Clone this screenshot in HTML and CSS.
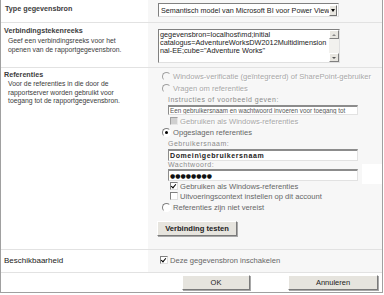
FILE: index.html
```html
<!DOCTYPE html>
<html lang="nl">
<head>
    <meta charset="UTF-8">
    <meta name="viewport" content="width=device-width, initial-scale=1.0">
    <title>Gegevensbron</title>
    <link rel="stylesheet" href="styles.css">
</head>
<body>
    <div class="dialog">
        <div class="row row-type">
            <div class="label">
                <div class="title">Type gegevensbron</div>
            </div>
            <div class="field">
                <div class="select">
                    <span class="select-text">Semantisch model van Microsoft BI voor Power View</span>
                    <span class="select-arrow"></span>
                </div>
            </div>
        </div>

        <div class="row row-conn">
            <div class="label">
                <div class="title">Verbindingstekenreeks</div>
                <div class="desc">Geef een verbindingsreeks voor het<br>openen van de rapportgegevensbron.</div>
            </div>
            <div class="field">
                <div class="textarea">
                    <div class="textarea-text">gegevensbron=localhost\md;initial<br>catalogus=AdventureWorksDW2012Multidimension<br>nal-EE;cube="Adventure Works"</div>
                    <div class="scrollbar">
                        <span class="scroll-btn up"></span>
                        <span class="scroll-btn down"></span>
                    </div>
                </div>
            </div>
        </div>

        <div class="row row-cred">
            <div class="label">
                <div class="title">Referenties</div>
                <div class="desc desc-cred">Voor de referenties in die door de<br>rapportserver worden gebruikt voor<br>toegang tot de rapportgegevensbron.</div>
            </div>
            <div class="field cred-field">
                <div class="opt opt-1 disabled"><span class="radio"></span>Windows-verificatie (geïntegreerd) of SharePoint-gebruiker</div>
                <div class="opt opt-2 disabled"><span class="radio"></span>Vragen om referenties</div>
                <div class="hint hint-1">Instructies of voorbeeld geven:</div>
                <div class="input input-small">Een gebruikersnaam en wachtwoord invoeren voor toegang tot</div>
                <div class="check check-1 disabled"><span class="box"></span>Gebruiken als Windows-referenties</div>
                <div class="opt opt-3"><span class="radio checked"></span>Opgeslagen referenties</div>
                <div class="hint hint-2">Gebruikersnaam:</div>
                <div class="input input-user">Domein\gebruikersnaam</div>
                <div class="hint hint-3">Wachtwoord:</div>
                <div class="input input-pass">●●●●●●●●</div>
                <div class="check check-2"><span class="box checked"></span>Gebruiken als Windows-referenties</div>
                <div class="check check-3"><span class="box"></span>Uitvoeringscontext instellen op dit account</div>
                <div class="opt opt-4"><span class="radio"></span>Referenties zijn niet vereist</div>
                <button class="btn btn-test">Verbinding testen</button>
                <span class="autofill"></span>
            </div>
        </div>

        <div class="row row-avail">
            <div class="label">
                <div class="plain">Beschikbaarheid</div>
            </div>
            <div class="field">
                <div class="check check-avail"><span class="box checked"></span>Deze gegevensbron inschakelen</div>
            </div>
        </div>

        <div class="actions">
            <button class="btn btn-ok">OK</button>
            <button class="btn btn-cancel">Annuleren</button>
        </div>
    </div>
</body>
</html>
```

FILE: styles.css
```css
body { margin: 0; padding: 0; background: #fff; font-family: "Liberation Sans", Arial, sans-serif; color: #444; }
.dialog { width: 381px; border: 1px solid #a0a0a0; border-top: none; }

/* rows */
.row { display: grid; grid-template-columns: 147px 1fr; border-bottom: 1px solid #e2e2e2; }
.label { padding-left: 3px; }
.field { background: #f7f7f7; padding-left: 10px; }
.title { font-weight: bold; font-size: 7.2px; line-height: 10px; color: #3c3c3c; }
.desc { font-size: 6.8px; line-height: 9px; padding-left: 4px; color: #3c3c3c; }
.desc-cred { line-height: 8.7px; }
.plain { font-size: 8px; line-height: 10px; color: #222; }

.row-type { height: 22px; }
.row-type .label { padding-top: 4px; padding-left: 4px; }
.row-type .field { padding-top: 3px; }

.row-conn { height: 44px; }
.row-conn .label { padding-top: 3px; }
.row-conn .field { padding-top: 6px; }

.row-cred { height: 181px; }
.row-cred .label { padding-top: 2px; }

.row-avail { height: 22px; }
.row-avail .label { padding-top: 6px; }
.row-avail .field { padding-top: 5px; }

/* select */
.select { width: 181px; height: 14px; box-sizing: border-box; background: #fff; border: 1px solid; border-color: #808080 #e0e0e0 #e0e0e0 #808080; display: flex; align-items: center; justify-content: space-between; }
.select-text { font-size: 7.2px; color: #222; padding-left: 2px; white-space: nowrap; }
.select-arrow { width: 11px; height: 11px; box-sizing: border-box; margin-right: 1px; background: #e8e6e0; border: 1px solid; border-color: #fff #707070 #707070 #fff; display: flex; align-items: center; justify-content: center; }
.select-arrow::after { content: ""; border-left: 2.5px solid transparent; border-right: 2.5px solid transparent; border-top: 3px solid #000; }

/* textarea */
.textarea { width: 182px; height: 34px; box-sizing: border-box; background: #fff; border: 1px solid; border-color: #808080 #e0e0e0 #e0e0e0 #808080; display: flex; justify-content: space-between; }
.textarea-text { font-size: 7.3px; line-height: 8px; color: #222; padding: 1px 0 0 1px; white-space: nowrap; }
.scrollbar { width: 10px; background: #f2f1ee; display: flex; flex-direction: column; justify-content: space-between; }
.scroll-btn { width: 10px; height: 9px; box-sizing: border-box; background: #e8e6e0; border: 1px solid; border-color: #fff #808080 #808080 #fff; display: flex; align-items: center; justify-content: center; }
.scroll-btn.up::after { content: ""; border-left: 2px solid transparent; border-right: 2px solid transparent; border-bottom: 2px solid #888; }
.scroll-btn.down::after { content: ""; border-left: 2px solid transparent; border-right: 2px solid transparent; border-top: 2px solid #555; }

/* credentials column */
.cred-field { position: relative; padding-top: 3px; display: flex; flex-direction: column; align-items: flex-start; }
.opt, .check { display: flex; align-items: center; height: 10px; font-size: 7.6px; color: #666; white-space: nowrap; }
.opt { margin-left: 4px; }
.check { margin-left: 12px; }
.disabled { color: #a8a8a8; text-shadow: 1px 1px 0 #fff; }
.opt-2 { margin-top: 2px; }
.opt-3 { margin-top: 1px; }
.opt-4 { margin-top: 1px; }
.check-1 { margin-top: 1px; }

.hint { margin-left: 10px; font-size: 7px; line-height: 9px; letter-spacing: 0.5px; color: #8c8c8c; white-space: nowrap; }
.hint-1 { margin-top: 2px; }
.hint-2 { margin-top: 2px; }
.hint-3 { line-height: 8px; }

.input { margin-left: 10px; width: 190px; box-sizing: border-box; background: #fff; border: 1px solid; border-top: 2px solid #8c8c8c; border-color: #8c8c8c #e2e2e2 #e2e2e2 #8c8c8c; white-space: nowrap; overflow: hidden; }
.input-small { margin-top: 1px; height: 10px; font-size: 6.3px; line-height: 7px; color: #555; padding-left: 1px; }
.input-user { margin-top: 1px; height: 12px; font-size: 7px; line-height: 9px; font-weight: bold; letter-spacing: 0.6px; color: #222; padding-left: 1px; }
.input-pass { height: 12px; font-family: "DejaVu Sans", sans-serif; font-size: 6px; line-height: 9px; color: #111; padding-left: 1px; }
.autofill { position: absolute; left: 214px; top: 96px; width: 20px; height: 20px; background: #fff; }

/* radio and checkbox */
.radio { width: 9px; height: 9px; box-sizing: border-box; margin-right: 2px; border-radius: 50%; border: 1px solid; border-color: #808080 #fff #fff #808080; background: #fff; display: flex; align-items: center; justify-content: center; flex-shrink: 0; }
.disabled .radio { background: transparent; border-color: #a0a0a0 transparent transparent #a0a0a0; }
.radio.checked::after { content: ""; width: 3px; height: 3px; border-radius: 50%; background: #000; }
.box { width: 8px; height: 8px; box-sizing: border-box; margin-right: 2px; border: 1px solid; border-color: #808080 #e0e0e0 #e0e0e0 #808080; background: #fff; position: relative; flex-shrink: 0; }
.disabled .box { background: #d0d0d0; border-color: #a0a0a0 #e8e8e8 #e8e8e8 #a0a0a0; }
.box.checked::after { content: ""; position: absolute; left: 1px; top: 0px; width: 2px; height: 4px; border: solid #000; border-width: 0 1.5px 1.5px 0; transform: rotate(40deg); }

.check-avail { margin-left: 2px; }

/* buttons */
.btn { font-family: "Liberation Sans", Arial, sans-serif; font-size: 7.5px; color: #222; background: #e6e4de; border: 1px solid; border-color: #fff #7a7a7a #7a7a7a #fff; box-shadow: 1px 1px 0 #a8a8a8; padding: 0; height: 15px; cursor: pointer; }
.btn-test { margin-top: 9px; margin-left: -1px; width: 80px; font-weight: bold; font-size: 7.6px; }
.actions { display: flex; justify-content: flex-end; gap: 38px; padding: 2px 4px 2px 0; height: 15px; }
.btn-ok { width: 68px; }
.btn-cancel { width: 90px; }
```
